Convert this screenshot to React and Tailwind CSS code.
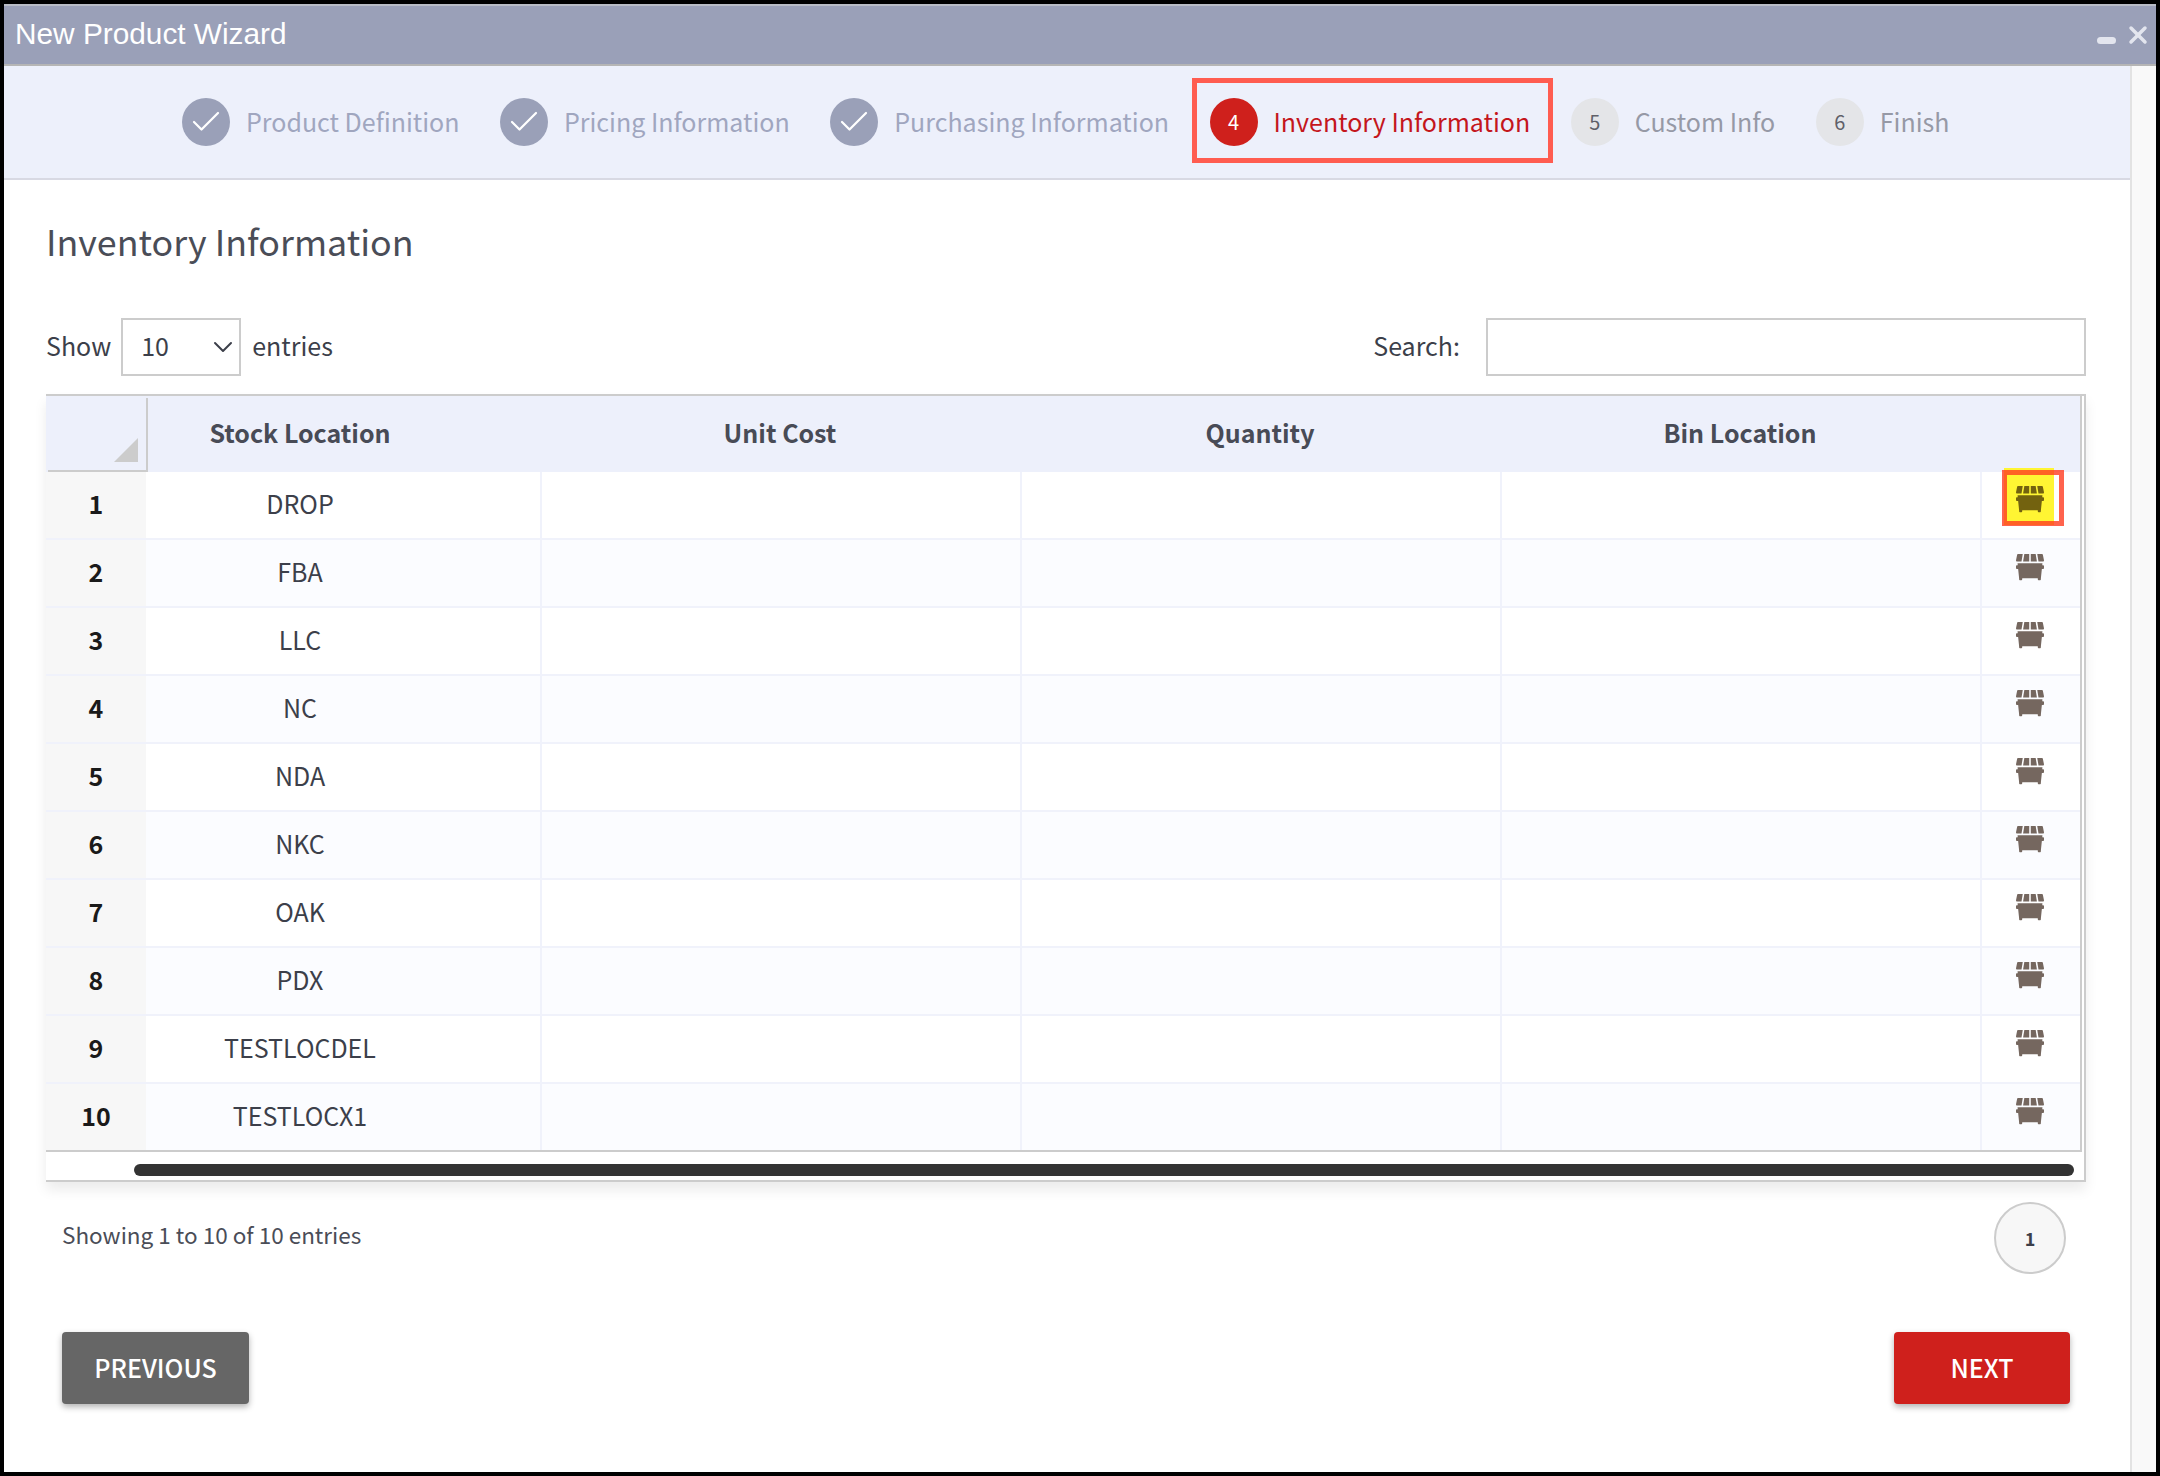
import React from 'react';
import { Check, ChevronDown, X } from 'lucide-react';
import { FaDumpster } from 'react-icons/fa';

const steps = [
  { label: 'Product Definition', state: 'done' },
  { label: 'Pricing Information', state: 'done' },
  { label: 'Purchasing Information', state: 'done' },
  { label: 'Inventory Information', state: 'active', num: 4 },
  { label: 'Custom Info', state: 'todo', num: 5 },
  { label: 'Finish', state: 'todo', num: 6 },
];

const locations = ['DROP', 'FBA', 'LLC', 'NC', 'NDA', 'NKC', 'OAK', 'PDX', 'TESTLOCDEL', 'TESTLOCX1'];

function Step({ step }) {
  if (step.state === 'active') {
    return (
      <div className="flex items-center gap-[16px] border-[5px] border-[#ff5c50] pl-[13px] pr-[18px] h-[85px] -mx-[18px] -mr-[23px] mb-[3px]">
        <span className="w-[48px] h-[48px] rounded-full bg-[#cf201c] text-white text-[20px] flex items-center justify-center mt-[3px]">{step.num}</span>
        <span className="text-[#c4161c] text-[25px] mt-[3px]">{step.label}</span>
      </div>
    );
  }
  return (
    <div className="flex items-center gap-[16px]">
      {step.state === 'done' ? (
        <span className="w-[48px] h-[48px] rounded-full bg-[#9aa0b8] text-white flex items-center justify-center">
          <Check size={36} strokeWidth={1.5} />
        </span>
      ) : (
        <span className="w-[48px] h-[48px] rounded-full bg-[#e4e5e8] text-[#5f6068] text-[20px] flex items-center justify-center">{step.num}</span>
      )}
      <span className={step.state === 'done' ? 'text-[#a0a6bf] text-[25px]' : 'text-[#9699a6] text-[25px]'}>{step.label}</span>
    </div>
  );
}

export default function App() {
  return (
    <div className="w-[2160px] h-[1476px] bg-black p-[4px] overflow-hidden font-['Noto_Sans_CJK_SC',sans-serif] text-[#3c3f4a]">
      <div className="w-full h-full bg-white flex flex-col">
        {/* Title bar */}
        <div className="h-[62px] shrink-0 bg-[#9aa0b8] border-t-2 border-b-2 border-t-[#b9bcc6] border-b-[#b5b5b5] flex items-center justify-between pl-[11px] pr-[4px]">
          <span className="font-['Liberation_Sans',sans-serif] text-[29.8px] text-white mb-[2px]">New Product Wizard</span>
          <div className="flex items-center gap-[8px] text-[#e3e5ee]">
            <span className="w-[19px] h-[7px] rounded-full bg-[#e3e5ee] mt-[10px]" />
            <X size={28} strokeWidth={3} />
          </div>
        </div>

        <div className="flex-1 flex min-h-0">
          <div className="w-[2126px] shrink-0 flex flex-col">
            {/* Wizard steps */}
            <div className="h-[114px] shrink-0 bg-[#edf0fb] border-b-2 border-[#d8d9e3] flex items-center gap-[40.5px] pl-[178px]">
              {steps.map((s) => (
                <Step key={s.label} step={s} />
              ))}
            </div>

            <div className="pl-[42px] pt-[35px]">
              <h1 className="text-[35.8px] leading-[50px] text-[#4a4d57] font-normal mb-[53px]">Inventory Information</h1>

              {/* Show + search */}
              <div className="w-[2040px] h-[58px] flex items-center justify-between text-[25px] mb-[18px]">
                <div className="flex items-center">
                  <span className="mb-[3px]">Show</span>
                  <div className="w-[120px] h-[58px] ml-[10px] mr-[11px] border-2 border-[#cccccc] flex items-center justify-between pl-[18px]">
                    <span className="mb-[3px]">10</span>
                    <ChevronDown size={32} strokeWidth={1.5} />
                  </div>
                  <span className="mb-[3px]">entries</span>
                </div>
                <div className="flex items-center">
                  <span className="mr-[26px] mb-[3px]">Search:</span>
                  <div className="w-[600px] h-[58px] border-2 border-[#cccccc]" />
                </div>
              </div>

              {/* Table */}
              <div className="w-[2040px] h-[788px] border-t-2 border-b-2 border-r-2 border-[#cccccc] pr-[2px] shadow-[0_8px_12px_rgba(0,0,0,0.08)]">
                <div className="w-[2036px] border-r-2 border-b-2 border-[#cccccc]">
                  <table className="w-full table-fixed border-collapse">
                    <colgroup>
                      <col className="w-[100px]" />
                      <col className="w-[395px]" />
                      <col className="w-[480px]" />
                      <col className="w-[480px]" />
                      <col className="w-[480px]" />
                      <col />
                    </colgroup>
                    <thead>
                      <tr className="h-[76px] bg-[#edf0fb] text-[25px] text-[#484b56]">
                        <th className="relative p-0">
                          <div className="absolute left-[2px] -right-[2px] top-[2px] bottom-0 border-r-2 border-b-2 border-[#cccccc]" />
                          <div className="absolute left-[68px] top-[42px] w-[24px] h-[24px] bg-[#cccccc] [clip-path:polygon(100%_0,100%_100%,0_100%)]" />
                        </th>
                        <th className="font-semibold pr-[87px] pb-[3px]">Stock Location</th>
                        <th className="font-semibold pb-[3px] pr-[2px]">Unit Cost</th>
                        <th className="font-semibold pb-[3px] pr-[2px]">Quantity</th>
                        <th className="font-semibold pb-[3px] pr-[2px]">Bin Location</th>
                        <th />
                      </tr>
                    </thead>
                    <tbody>
                      {locations.map((loc, i) => (
                        <tr
                          key={loc}
                          className={`${i === 0 || i === 9 ? 'h-[67px]' : 'h-[68px]'} text-[25px] ${i % 2 === 0 ? 'bg-white' : 'bg-[#fbfcff]'} ${i < 9 ? 'border-b-2 border-[#f0f2fb]' : ''}`}
                        >
                          <td className="bg-[#f7f7f7] text-center font-semibold text-[#1a1a1a] pb-[2px]">{i + 1}</td>
                          <td className="text-center pr-[86px] border-r-2 border-[#f0f2fb] pb-[2px]">{loc}</td>
                          <td className="border-r-2 border-[#f0f2fb]" />
                          <td className="border-r-2 border-[#f0f2fb]" />
                          <td className="border-r-2 border-[#f0f2fb]" />
                          <td className="align-top">
                            <div className={`relative w-[28px] h-[26px] ml-[34px] mt-[14px] ${i === 0 ? 'text-[#73620f]' : 'text-[#75675f]'}`}>
                              {i === 0 && <div className="absolute -left-[12px] -top-[18px] w-[50px] h-[57px] bg-[#fff533]" />}
                              <FaDumpster preserveAspectRatio="none" className="absolute left-0 -top-[2px] w-[28px] h-[30px]" />
                              {i === 0 && <div className="absolute -left-[14px] -top-[16px] w-[62px] h-[56px] border-[5px] border-[#ff3c20]/80" />}
                            </div>
                          </td>
                        </tr>
                      ))}
                    </tbody>
                  </table>
                </div>
                {/* Horizontal scrollbar */}
                <div className="h-[12px] w-[1940px] ml-[88px] mt-[12px] rounded-full bg-[#333333]" />
              </div>

              {/* Footer */}
              <div className="w-[2008px] ml-[16px]">
                <div className="flex items-center justify-between pt-[20px] pr-[4px]">
                  <span className="text-[22.5px] text-[#4a4d57] mb-[6px]">Showing 1 to 10 of 10 entries</span>
                  <span className="w-[72px] h-[72px] rounded-full border-2 border-[#cccccc] bg-[#f7f7f7] flex items-center justify-center text-[18px] font-semibold text-[#3c3f4a]">1</span>
                </div>
                <div className="flex items-center justify-between mt-[58px]">
                  <button className="w-[187px] h-[72px] rounded-[4px] bg-[#666666] text-white text-[25px] font-medium shadow-[0_3px_6px_rgba(0,0,0,0.3)]">PREVIOUS</button>
                  <button className="w-[176px] h-[72px] rounded-[4px] bg-[#cf201c] text-white text-[25px] font-medium shadow-[0_3px_6px_rgba(0,0,0,0.3)]">NEXT</button>
                </div>
              </div>
            </div>
          </div>

          {/* Page scrollbar track */}
          <div className="flex-1 bg-[#f9f9f9] border-l-2 border-[#e3e3e3]" />
        </div>
      </div>
    </div>
  );
}
